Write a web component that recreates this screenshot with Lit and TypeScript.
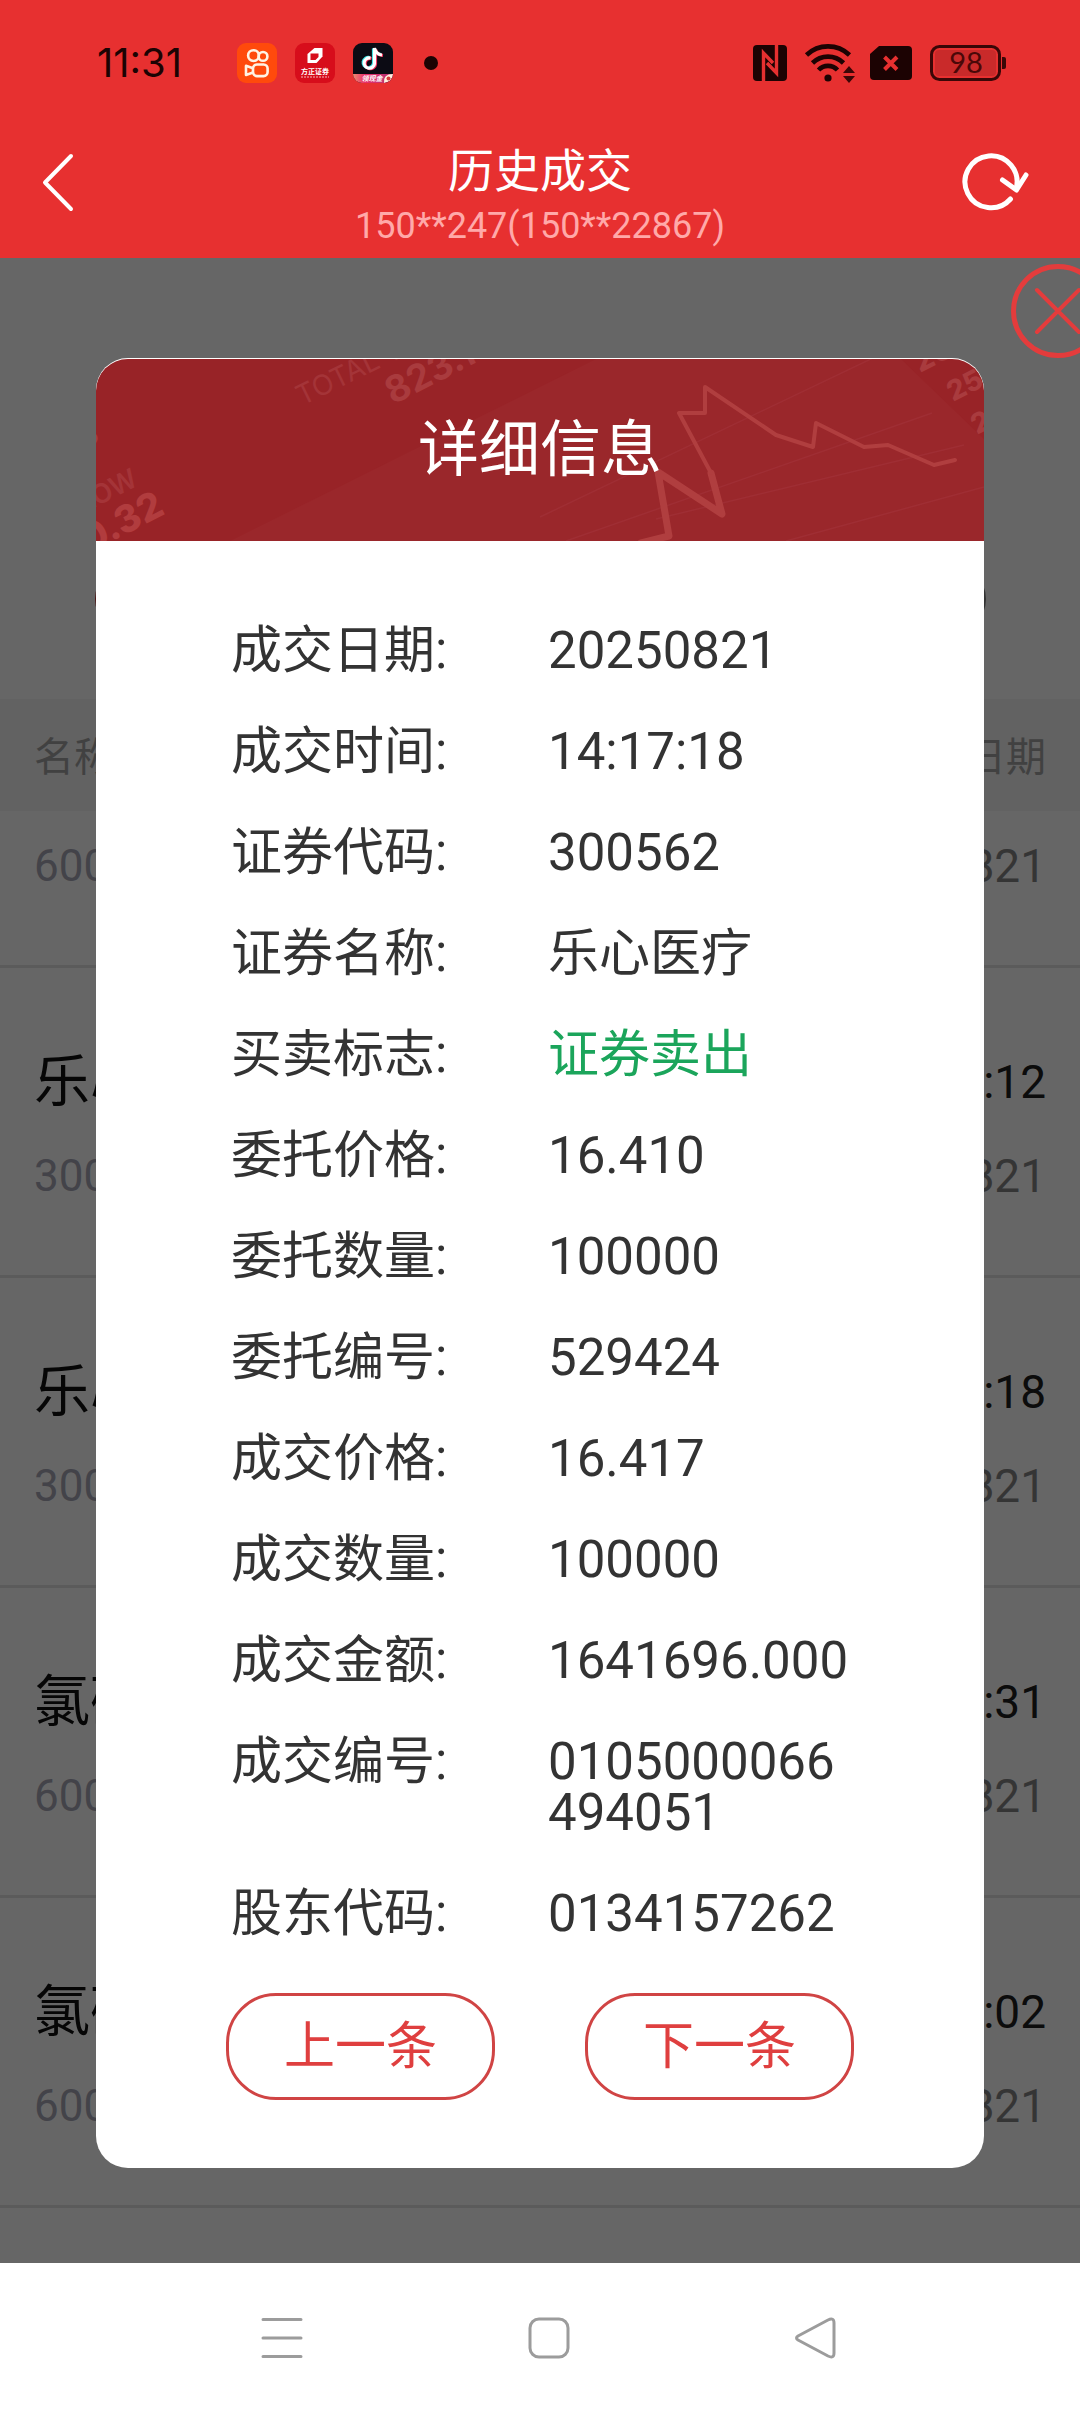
import { LitElement, html, css, svg } from "lit";
import { customElement, property } from "lit/decorators.js";
import { classMap } from "lit/directives/class-map.js";

interface Detail {
  label: string;
  value: string;
  sell?: boolean;
}

interface Trade {
  name: string;
  code: string;
  time: string;
  date: string;
}

const DETAILS: Detail[] = [
  { label: "成交日期", value: "20250821" },
  { label: "成交时间", value: "14:17:18" },
  { label: "证券代码", value: "300562" },
  { label: "证券名称", value: "乐心医疗" },
  { label: "买卖标志", value: "证券卖出", sell: true },
  { label: "委托价格", value: "16.410" },
  { label: "委托数量", value: "100000" },
  { label: "委托编号", value: "529424" },
  { label: "成交价格", value: "16.417" },
  { label: "成交数量", value: "100000" },
  { label: "成交金额", value: "1641696.000" },
  { label: "成交编号", value: "0105000066494051" },
  { label: "股东代码", value: "0134157262" },
];

const TRADES: Trade[] = [
  { name: "乐心医疗", code: "300562", time: "14:17:12", date: "20250821" },
  { name: "乐心医疗", code: "300562", time: "14:17:18", date: "20250821" },
  { name: "氯碱化工", code: "600618", time: "14:16:31", date: "20250821" },
  { name: "氯碱化工", code: "600618", time: "14:16:02", date: "20250821" },
];

@customElement("status-bar")
export class StatusBar extends LitElement {
  static styles = css`
    :host {
      display: block;
    }
    .bar {
      display: flex;
      align-items: center;
      justify-content: space-between;
      height: 89px;
      padding: 18px 74px 0 97px;
      color: #1c0303;
    }
    .group {
      display: flex;
      align-items: center;
    }
    .time {
      font: 400 40px/44px Inter, Roboto, sans-serif;
      width: 140px;
    }
    .apps {
      display: flex;
      align-items: center;
      gap: 18px;
    }
    .dot {
      width: 14px;
      height: 14px;
      margin-left: 31px;
      border-radius: 50%;
      background: #1c0303;
    }
    .signals {
      gap: 18px;
    }
    svg {
      display: block;
      overflow: visible;
    }
    .tiny {
      font-family: "Noto Sans CJK SC", sans-serif;
      font-weight: 700;
    }
    .charge {
      font: 400 29px Lato, Roboto, sans-serif;
    }
  `;

  render() {
    return html`
      <div class="bar">
        <div class="group">
          <span class="time">11:31</span>
          <div class="apps">
            <svg width="40" height="40" viewBox="0 0 40 40" aria-hidden="true">
              <rect width="40" height="40" rx="9" fill="#ff4a0c" />
              <g fill="none" stroke="#fff3e4" stroke-width="2.6" stroke-linejoin="round">
                <circle cx="16.5" cy="12.6" r="5.4" />
                <circle cx="26" cy="13.4" r="4.4" />
                <rect x="16" y="21.5" width="14.6" height="11.6" rx="4" />
                <path d="M16 25.2 L9 22.8 V32 L16 29.6" />
              </g>
            </svg>
            <svg width="40" height="40" viewBox="0 0 40 40" aria-hidden="true">
              <rect width="40" height="40" rx="9" fill="#d70d1b" />
              <path fill="#fff" d="M12.500 11 L19.500 5 H27.500 V13.500 L21.500 20 H12.500 Z" />
              <path fill="#d70d1b" d="M15.500 10.500 H23.500 L23.500 14 L20.500 17 H15.500 Z" />
              <text class="tiny" x="20" y="31" font-size="7" text-anchor="middle" fill="#fff">方正证券</text>
              <path d="M6 34 H34" stroke="#f6b9bb" stroke-width="1" stroke-dasharray="2 1" />
            </svg>
            <svg width="40" height="40" viewBox="0 0 40 40" aria-hidden="true">
              <defs>
                <clipPath id="tile"><rect width="40" height="40" rx="9" /></clipPath>
                <linearGradient id="promo" x1="0" x2="1">
                  <stop offset="0" stop-color="#f08a70" />
                  <stop offset="0.300" stop-color="#e8306a" />
                  <stop offset="0.800" stop-color="#c03070" />
                </linearGradient>
              </defs>
              <g clip-path="url(#tile)">
                <rect width="40" height="40" fill="#0c0b14" />
                <g fill="none" stroke-width="3.200">
                  <path stroke="#35e0e4" d="M16.500 14.500 A5.200 5.200 0 1 0 20.500 20 V5.500 Q22 11 28 11.500" />
                  <path stroke="#f2325c" d="M18.500 15.500 A5.200 5.200 0 1 0 22.500 21 V6.500 Q24 12 30 12.500" />
                  <path stroke="#fff" d="M17.500 15 A5.200 5.200 0 1 0 21.500 20.500 V5 Q23 11.500 29 12" />
                </g>
                <rect y="31" width="40" height="9" fill="url(#promo)" />
                <text class="tiny" x="19" y="38" font-size="7" font-style="italic" text-anchor="middle" fill="#fff">领现金</text>
                <path d="M31 40 Q30 31 40 31 Q40 38 31 40 Z" fill="#fff1df" />
                <circle cx="35.500" cy="35.500" r="2" fill="#d83a3a" />
              </g>
            </svg>
          </div>
          <span class="dot"></span>
        </div>
        <div class="group signals">
          <svg width="34" height="36" viewBox="0 0 34 36" aria-hidden="true">
            <rect width="34" height="36" rx="4" fill="#1c0303" />
            <path d="M10.500 36 V8 L20 18" fill="none" stroke="#e73030" stroke-width="3.400" />
            <path d="M23.500 0 V28 L14 18" fill="none" stroke="#e73030" stroke-width="3.400" />
          </svg>
          <svg width="47" height="40" viewBox="0 0 47 40" aria-hidden="true">
            <g fill="none" stroke="#1c0303" stroke-width="4.600">
              <path d="M1.500 12 A31 31 0 0 1 44.500 12" />
              <path d="M7.500 20 A22 22 0 0 1 38.500 20" />
              <path d="M13.500 27 A13 13 0 0 1 32.500 27" />
            </g>
            <circle cx="23" cy="35" r="3.600" fill="#1c0303" />
            <path d="M44 23 L50 30 H38 Z M44 40 L38 33 H50 Z" fill="#3a0707" />
          </svg>
          <svg width="42" height="34" viewBox="0 0 42 34" aria-hidden="true">
            <path d="M9 0 H38 Q42 0 42 4 V30 Q42 34 38 34 H4 Q0 34 0 30 V8 Z" fill="#1c0303" />
            <path d="M14.500 11 L27 23.500 M27 11 L14.500 23.500" stroke="#e73030" stroke-width="4" />
          </svg>
          <svg width="76" height="36" viewBox="0 0 76 36" role="img" aria-label="98">
            <rect x="1.500" y="1.500" width="68" height="33" rx="8" fill="none" stroke="#3a0707" stroke-width="3" />
            <rect x="5" y="5" width="61" height="26" rx="4" fill="#c92a2a" />
            <path d="M72 12 H74 Q76 12 76 14 V22 Q76 24 74 24 H72 Z" fill="#3a0707" />
            <text class="charge" x="36" y="28" text-anchor="middle" fill="#4a0808">98</text>
          </svg>
        </div>
      </div>
    `;
  }
}

@customElement("title-bar")
export class TitleBar extends LitElement {
  static styles = css`
    :host {
      display: block;
    }
    .bar {
      display: grid;
      grid-template-columns: 1fr auto 1fr;
      height: 151px;
      padding: 0 50px 0 40px;
      color: #fff;
    }
    .icon {
      align-self: center;
      border: 0;
      padding: 0;
      background: none;
      cursor: pointer;
    }
    .refresh {
      justify-self: end;
    }
    .back {
      justify-self: start;
    }
    svg {
      display: block;
    }
    .titles {
      display: flex;
      flex-direction: column;
      gap: 10px;
      padding: 39px 0 0 10px;
      text-align: center;
    }
    .title {
      margin: 0;
      font-weight: 400;
      font-size: 46px;
      line-height: 50px;
    }
    .account {
      margin: 0;
      font-size: 36px;
      line-height: 40px;
      color: #ffa9a9;
    }
  `;

  render() {
    return html`
      <header class="bar">
        <button class="icon back" aria-label="返回">
          <svg width="36" height="60" viewBox="0 0 36 60">
            <path d="M31 3 L5 29.500 L31 56" fill="none" stroke="#fff" stroke-width="4" stroke-linecap="round" stroke-linejoin="round" />
          </svg>
        </button>
        <div class="titles">
          <h1 class="title">历史成交</h1>
          <p class="account">150**247(150**22867)</p>
        </div>
        <button class="icon refresh" aria-label="刷新">
          <svg width="68" height="60" viewBox="0 0 68 60">
            <g fill="none" stroke="#fff" stroke-width="5" stroke-linecap="round" stroke-linejoin="round">
              <path d="M48.500 46 A26 26 0 1 1 54 36" />
              <path d="M40.500 27 L54.500 37 L64 22" />
            </g>
          </svg>
        </button>
      </header>
    `;
  }
}

@customElement("trade-list")
export class TradeList extends LitElement {
  @property({ attribute: false }) trades: Trade[] = [];

  static styles = css`
    :host {
      display: block;
      background: #fff;
    }
    .tabs {
      display: flex;
      gap: 40px;
      padding: 305px 94px 64px 95px;
    }
    .pill {
      flex: 1;
      height: 72px;
      border-radius: 36px;
      background: #808080;
    }
    .active {
      background: #b83030;
    }
    .head,
    .line {
      display: flex;
      align-items: center;
      justify-content: space-between;
    }
    .head {
      height: 110px;
      padding: 0 34px 2px;
      background: #f4f4f4;
      color: #a4a4a4;
      font-size: 40px;
    }
    .row {
      padding: 86px 34px 77px;
      border-bottom: 3px solid #e4e4e4;
    }
    .partial {
      padding-top: 33px;
    }
    .main {
      height: 56px;
      margin-bottom: 44px;
      color: #101010;
    }
    .sub {
      height: 44px;
    }
    .name {
      font-size: 56px;
      line-height: 56px;
    }
    .code {
      font-size: 44px;
      line-height: 44px;
      color: #a7a7b6;
    }
    .time,
    .date {
      font-size: 46px;
      line-height: 44px;
    }
    .time {
      color: #202020;
    }
    .date {
      color: #868686;
    }
  `;

  render() {
    return html`
      <div class="tabs">
        <span class="pill active"></span>
        <span class="pill"></span>
      </div>
      <div class="head"><span>名称</span><span>日期</span></div>
      <div class="row partial">
        <div class="line sub"><span class="code">600618</span><span class="date">20250821</span></div>
      </div>
      ${this.trades.map(
        (t) => html`
          <div class="row">
            <div class="line main"><span class="name">${t.name}</span><span class="time">${t.time}</span></div>
            <div class="line sub"><span class="code">${t.code}</span><span class="date">${t.date}</span></div>
          </div>
        `
      )}
    `;
  }
}

const banner = svg`
  <rect width="888" height="182" fill="#982327" />
  <path d="M134 182 L500 0 H805 L888 80 V182 Z" fill="#9a272b" />
  <g stroke="#9f2e34" stroke-width="1.500" fill="none">
    <path d="M444 158 L800 -12" />
    <path d="M470 182 L836 54" />
    <path d="M560 160 L868 86" />
    <path d="M690 182 L888 128" />
  </g>
  <g font-family="Inter, sans-serif" fill="#a93b3e">
    <text font-size="28" fill="#a43438" transform="translate(206 47) rotate(-26)">TOTAL V</text>
    <text font-size="37" font-weight="700" transform="translate(297 46) rotate(-27)">823.14</text>
    <text font-size="34" font-weight="700" transform="translate(-14 92) rotate(-27)">3</text>
    <text font-size="27" font-weight="600" fill="#a43438" transform="translate(-12 154) rotate(-27)">LOW</text>
    <text font-size="38" font-weight="800" fill="#b13c3e" transform="translate(-7 194) rotate(-27)">0.32</text>
    <text font-size="30" font-weight="800" transform="translate(824 14) rotate(-27)">26</text>
    <text font-size="28" font-weight="800" transform="translate(857 43) rotate(-27)">25.</text>
    <text font-size="28" font-weight="800" transform="translate(881 76) rotate(-27)">2</text>
  </g>
  <g fill="none" stroke="#b03e3f" stroke-linejoin="round" stroke-linecap="round">
    <path d="M545 184 L573 177 L562 113 L626 155 L615 114" stroke-width="7" />
    <path d="M615 114 L583 54 H609 V28 L680 76 L717 88 L720 64 L768 88 L792 86 L838 106 L859 101" stroke-width="4" />
  </g>
`;

@customElement("detail-dialog")
export class DetailDialog extends LitElement {
  @property({ attribute: false }) details: Detail[] = [];

  static styles = css`
    :host {
      display: block;
    }
    .dialog {
      overflow: hidden;
      border-radius: 32px;
      background: #fff;
      color: #333;
    }
    .banner {
      display: grid;
      height: 182px;
      padding-top: 1px;
      overflow: hidden;
    }
    .art,
    .title {
      grid-area: 1 / 1;
    }
    .art {
      display: block;
      width: 100%;
      height: 182px;
      border-radius: 32px 32px 0 0;
    }
    .title {
      align-self: center;
      justify-self: center;
      margin: 0;
      color: #fff;
      font-weight: 400;
      font-size: 61px;
      line-height: 60px;
    }
    .body {
      padding: 84px 130px 68px;
    }
    .list {
      display: flex;
      flex-direction: column;
      gap: 50px;
      margin: 0;
      padding-left: 5px;
      font-size: 51px;
      line-height: 51px;
    }
    .item {
      display: grid;
      grid-template-columns: 317px minmax(0, 1fr);
    }
    .value {
      margin: 0;
      word-break: break-all;
    }
    .sell {
      color: #1ba55b;
    }
    .actions {
      display: flex;
      gap: 90px;
      margin-top: 54px;
    }
    .action {
      flex: 1;
      height: 107px;
      padding: 0;
      border: 3px solid #d04444;
      border-radius: 50px;
      background: #fff;
      color: #df3f3f;
      font: inherit;
      font-size: 51px;
      line-height: 51px;
      cursor: pointer;
    }
  `;

  render() {
    return html`
      <section class="dialog" role="dialog" aria-labelledby="title">
        <div class="banner">
          <svg class="art" viewBox="0 0 888 182" preserveAspectRatio="xMidYMid slice" aria-hidden="true">${banner}</svg>
          <h2 class="title" id="title">详细信息</h2>
        </div>
        <div class="body">
          <dl class="list">
            ${this.details.map(
              (d) => html`
                <div class="item">
                  <dt>${d.label}:</dt>
                  <dd class=${classMap({ value: true, sell: !!d.sell })}>${d.value}</dd>
                </div>
              `
            )}
          </dl>
          <div class="actions">
            <button class="action">上一条</button>
            <button class="action">下一条</button>
          </div>
        </div>
      </section>
    `;
  }
}

@customElement("system-nav")
export class SystemNav extends LitElement {
  static styles = css`
    :host {
      display: block;
    }
    .nav {
      display: flex;
      align-items: center;
      justify-content: center;
      gap: 223px;
      height: 149px;
      padding-left: 18px;
      background: #fff;
    }
    .key {
      border: 0;
      padding: 0;
      background: none;
    }
    svg {
      display: block;
    }
  `;

  render() {
    return html`
      <nav class="nav">
        <button class="key" aria-label="菜单">
          <svg width="44" height="44" viewBox="0 0 44 44">
            <path d="M3 3.500 H41 M3 22 H41 M3 40.500 H41" stroke="#9c9c9c" stroke-width="3" stroke-linecap="round" />
          </svg>
        </button>
        <button class="key" aria-label="主页">
          <svg width="44" height="44" viewBox="0 0 44 44">
            <rect x="3" y="3" width="38" height="38" rx="9" fill="none" stroke="#9c9c9c" stroke-width="3" />
          </svg>
        </button>
        <button class="key" aria-label="返回">
          <svg width="44" height="44" viewBox="0 0 44 44">
            <path d="M4 20 L34 4 Q40 1 40 7 V37 Q40 43 34 40 L4 24 Q1 22 4 20 Z" fill="none" stroke="#9c9c9c" stroke-width="3" stroke-linejoin="round" />
          </svg>
        </button>
      </nav>
    `;
  }
}

@customElement("app-root")
export class AppRoot extends LitElement {
  static styles = css`
    :host {
      display: block;
      font-family: Roboto, "Noto Sans CJK SC", sans-serif;
    }
    .screen {
      display: flex;
      flex-direction: column;
      min-height: 100vh;
    }
    .top {
      background: #e73030;
    }
    .content {
      position: relative;
      flex: 1;
      overflow: hidden;
    }
    .under {
      position: absolute;
      inset: 0;
      overflow: hidden;
      background: #fff;
    }
    .overlay {
      position: relative;
      box-sizing: border-box;
      min-height: 100%;
      padding: 100px 96px 95px;
      background: rgba(0, 0, 0, 0.6);
    }
    .close {
      position: absolute;
      top: 5px;
      right: -26px;
      border: 0;
      padding: 0;
      background: none;
      cursor: pointer;
    }
    .cross {
      display: block;
    }
  `;

  render() {
    return html`
      <main class="screen">
        <div class="top">
          <status-bar></status-bar>
          <title-bar></title-bar>
        </div>
        <div class="content">
          <div class="under"><trade-list .trades=${TRADES}></trade-list></div>
          <div class="overlay">
            <detail-dialog .details=${DETAILS}></detail-dialog>
            <button class="close" aria-label="关闭">
              <svg class="cross" width="96" height="96" viewBox="0 0 96 96">
                <g fill="none" stroke="#e43c3c" stroke-linecap="round">
                  <circle cx="48" cy="48" r="44.500" stroke-width="5" />
                  <path d="M27 27 L69 69 M69 27 L27 69" stroke-width="4" />
                </g>
              </svg>
            </button>
          </div>
        </div>
        <system-nav></system-nav>
      </main>
    `;
  }
}
